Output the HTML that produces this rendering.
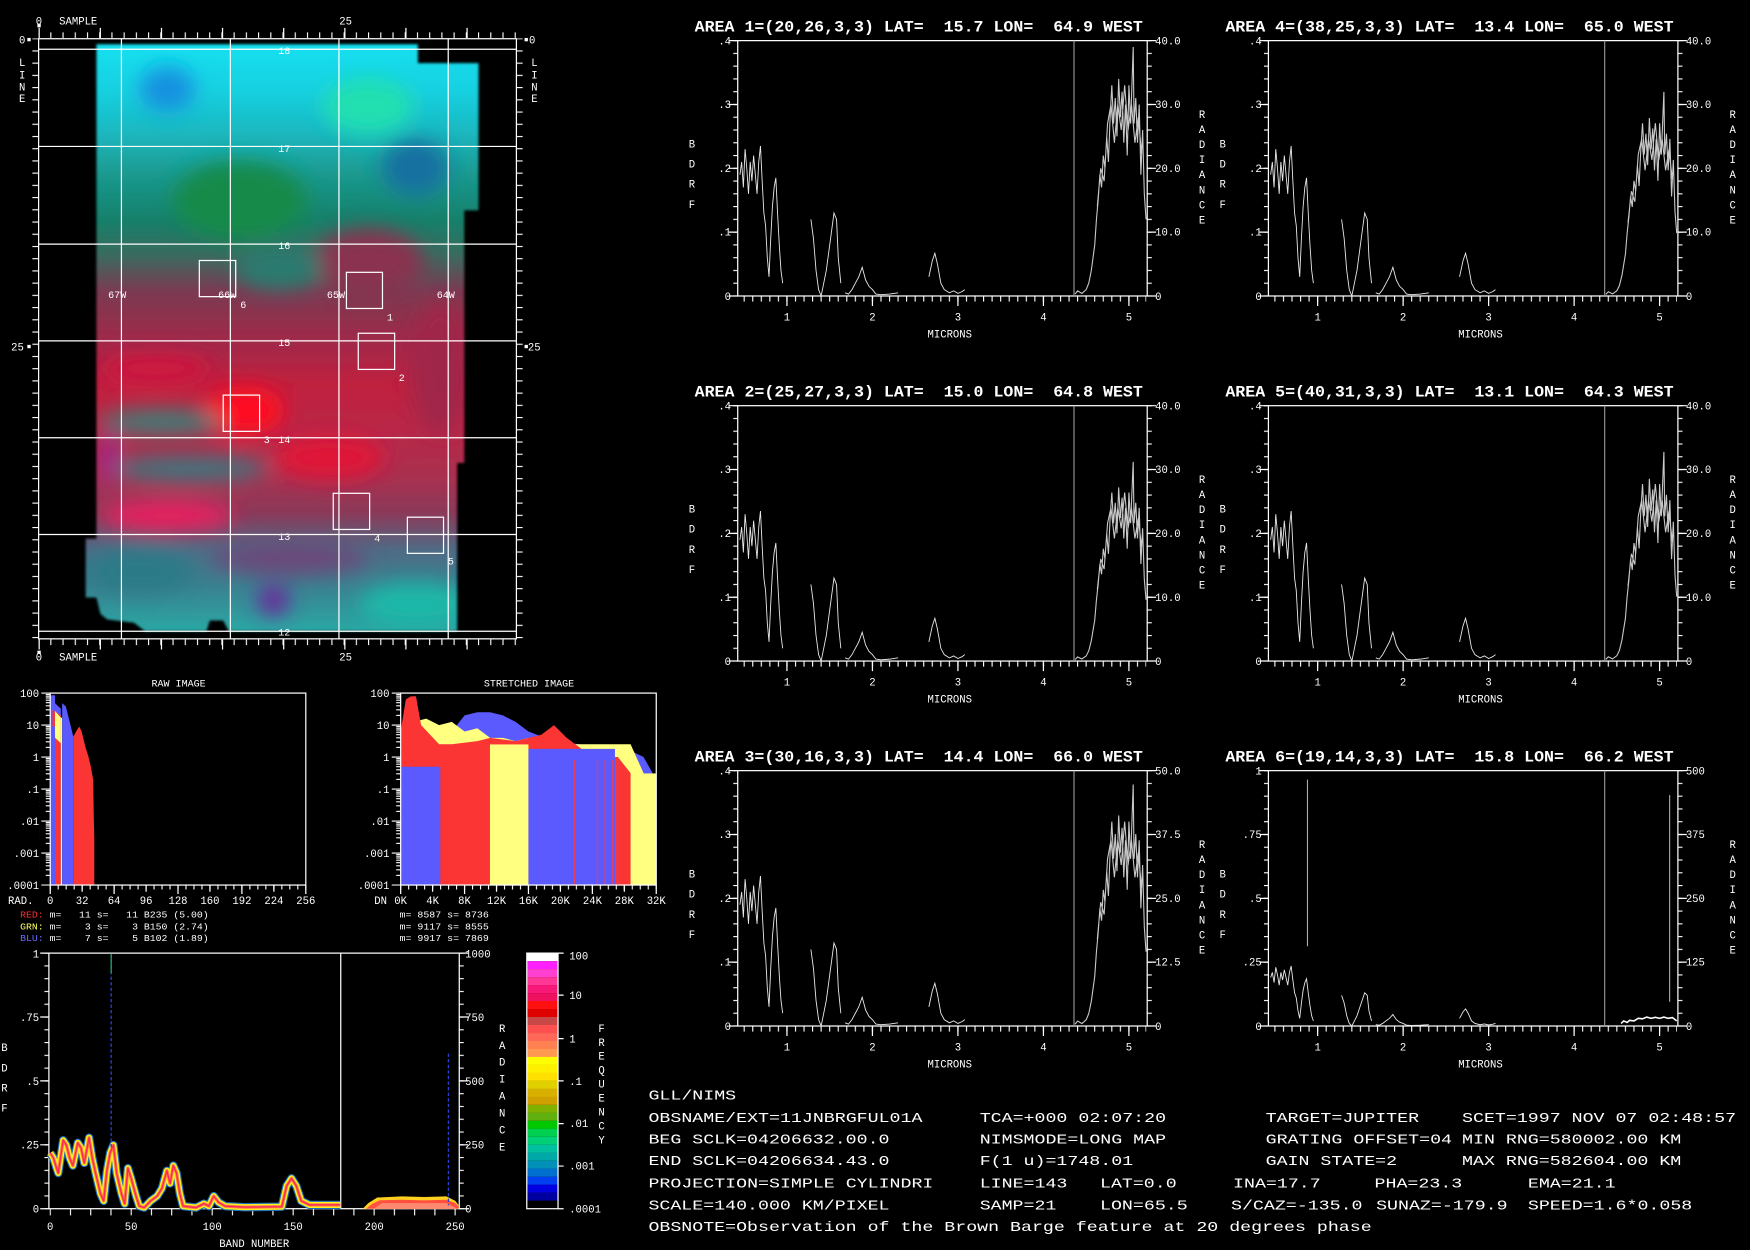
<!DOCTYPE html>
<html><head><meta charset="utf-8"><style>
html,body{margin:0;padding:0;background:#000;}
svg{display:block;}
text{font-family:"Liberation Mono",monospace;fill:#fff;white-space:pre;}
</style></head><body>
<svg width="1750" height="1250" viewBox="0 0 1568 1120" preserveAspectRatio="none" xmlns="http://www.w3.org/2000/svg">
<defs>
<pattern id="pb" patternUnits="userSpaceOnUse" x="5.3" y="0" width="7.66" height="10"><rect x="0" y="0" width="1" height="10" fill="#fff"/></pattern>
<pattern id="pl" patternUnits="userSpaceOnUse" x="0" y="-229.3" width="10" height="11.44"><rect x="0" y="0" width="10" height="1" fill="#fff"/></pattern>
<pattern id="plog" patternUnits="userSpaceOnUse" x="-10" y="-0.5" width="10" height="28.67">
<rect x="2" y="0" width="8" height="1" fill="#fff"/>
<rect x="6" y="1.3" width="4" height="1" fill="#fff"/><rect x="6" y="2.8" width="4" height="1" fill="#fff"/>
<rect x="6" y="4.4" width="4" height="1" fill="#fff"/><rect x="6" y="6.4" width="4" height="1" fill="#fff"/>
<rect x="6" y="8.6" width="4" height="1" fill="#fff"/><rect x="6" y="11.4" width="4" height="1" fill="#fff"/>
<rect x="6" y="15" width="4" height="1" fill="#fff"/><rect x="6" y="20" width="4" height="1" fill="#fff"/>
</pattern>
<pattern id="phb" patternUnits="userSpaceOnUse" x="-0.5" y="0" width="7.156" height="10"><rect x="0" y="0" width="1" height="10" fill="#fff"/></pattern>
<pattern id="pst" patternUnits="userSpaceOnUse" x="34.1" y="0" width="10.95" height="10"><rect x="0" y="0" width="1" height="10" fill="#fff"/></pattern>
<pattern id="psl" patternUnits="userSpaceOnUse" x="0" y="34.2" width="10" height="10.95"><rect x="0" y="0" width="10" height="1" fill="#fff"/></pattern>
<pattern id="pbl" patternUnits="userSpaceOnUse" x="0" y="853.5" width="10" height="11.45"><rect x="0" y="0" width="10" height="1" fill="#fff"/></pattern>
<pattern id="pbb" patternUnits="userSpaceOnUse" x="44.5" y="0" width="18.14" height="10"><rect x="0" y="0" width="1" height="10" fill="#fff"/></pattern>

<g id="ax">
<rect x="0" y="-228.8" width="366.9" height="228.8" fill="none" stroke="#fff" stroke-width="1.1"/>
<rect x="5" y="0" width="361" height="5" fill="url(#pb)"/>
<path d="M44.1,0v9M120.7,0v9M197.3,0v9M273.9,0v9M350.5,0v9" stroke="#fff" stroke-width="1.1"/>
<rect x="-4" y="-229.5" width="4" height="230" fill="url(#pl)"/>
<rect x="367" y="-229.5" width="4" height="230" fill="url(#pl)"/>
<path d="M-8,-228.8h8M-8,-171.6h8M-8,-114.4h8M-8,-57.2h8M-8,0h8M366.9,-228.8h8M366.9,-171.6h8M366.9,-114.4h8M366.9,-57.2h8M366.9,0h8" stroke="#fff" stroke-width="1.1"/>
<line x1="301.3" y1="-228.8" x2="301.3" y2="0" stroke="#9a9a9a" stroke-width="1"/>
<g font-size="9.5" text-anchor="middle">
<text x="44.1" y="22">1</text><text x="120.7" y="22">2</text><text x="197.3" y="22">3</text><text x="273.9" y="22">4</text><text x="350.5" y="22">5</text>
<text x="190" y="37">MICRONS</text>
<text x="-41" y="-133">B</text><text x="-41" y="-115">D</text><text x="-41" y="-97">R</text><text x="-41" y="-79">F</text>
<text x="416" y="-159.5">R</text><text x="416" y="-146">A</text><text x="416" y="-132.5">D</text><text x="416" y="-119">I</text><text x="416" y="-105.5">A</text><text x="416" y="-92">N</text><text x="416" y="-78.5">C</text><text x="416" y="-65">E</text>
</g>
</g>
<g id="lab4" font-size="9.5">
<g text-anchor="end"><text x="-6" y="-225.5">.4</text><text x="-6" y="-168.3">.3</text><text x="-6" y="-111">.2</text><text x="-6" y="-54">.1</text><text x="-6" y="3.5">0</text></g>
</g>
<path id="vis" fill="none" stroke="#e8e8e8" stroke-width="0.9" vector-effect="non-scaling-stroke" d="M.45,.19 L.47,.21 .49,.17 .51,.23 .53,.2 .55,.16 .57,.21 .59,.18 .61,.22 .63,.19 .65,.16 .67,.21 .69,.235 .71,.18 .73,.13 .75,.11 .77,.06 .79,.03 .81,.09 .83,.14 .85,.17 .87,.185 .89,.13 .91,.08 .93,.04 .95,.02 M1.28,.12 L1.31,.09 1.34,.04 1.37,.01 1.4,0 1.43,.02 1.46,.04 1.49,.07 1.52,.1 1.55,.13 1.58,.12 1.6,.06 1.63,.02 M1.68,.005 L1.72,.003 1.76,.01 1.8,.02 1.84,.03 1.88,.045 1.92,.025 1.96,.015 2,.01 2.04,.003 2.1,.002 2.2,.003 2.3,.005 M2.66,.03 L2.7,.055 2.73,.067 2.76,.05 2.8,.02 2.84,.01 2.9,.005 2.95,.008 3,.004 3.05,.007 3.08,.01"/>
<path id="ir" fill="none" stroke="#c8c8c8" stroke-width="1.1" vector-effect="non-scaling-stroke" d="M4.37,.003 L4.4,.008 4.45,.004 4.5,.01 4.53,.02 4.56,.04 4.6,.08 4.62,.12 4.64,.15 4.66,.19 4.68,.17 4.7,.22 4.72,.2 4.74,.25 4.76,.21 4.78,.28 4.8,.33 4.82,.27 4.84,.31 4.86,.25 4.88,.34 4.9,.28 4.92,.32 4.94,.24 4.96,.3 4.98,.22 5,.33 5.02,.27 5.04,.35 5.05,.39 5.06,.27 5.08,.31 5.1,.24 5.12,.3 5.14,.19 5.16,.26 5.18,.16 5.2,.12 M4.63,.14 L4.67,.2 4.71,.18 4.75,.27 4.79,.3 4.83,.24 4.87,.3 4.91,.26 4.95,.33 4.99,.26 5.03,.3 5.07,.24 5.11,.28 5.15,.22"/>
<polyline id="bc" fill="none" stroke-linejoin="round" points="45,1033 47.9,1037.6 50.7,1046.7 52.2,1051 56.6,1021.7 59.5,1026 62.4,1037.6 65.3,1044.4 69.7,1024 72.6,1028.5 75.5,1042 79.8,1019.4 82.7,1037.6 85.6,1051 90,1069.4 92.9,1076 95.8,1049 98.7,1033 101.6,1026 104.5,1051 108.8,1069.4 111.7,1078.5 114.6,1046.7 117.5,1055.8 121.9,1071.7 124.8,1080.7 129.2,1082 135,1076 140.8,1071.7 145.1,1064.8 149.5,1049 152.4,1060.3 155.3,1044.4 158.2,1051 161.1,1069.4 164,1080.7 175.6,1082 182.8,1078.5 187.2,1080.7 191.5,1071.7 195.9,1077.3 201.7,1080.7 219.1,1081.6 252.5,1081.2 256.8,1062.6 261.2,1055.8 265.5,1062.6 269.9,1076 277.2,1079.6 305,1079.6"/>

<g id="hax">
<rect x="0" y="0" width="229" height="172" fill="none" stroke="#fff" stroke-width="1.1"/>
<rect x="-10" y="-0.5" width="10" height="173" fill="url(#plog)"/>
<rect x="-0.5" y="172" width="230" height="4" fill="url(#phb)"/>
<path d="M0,172v8M57.25,172v8M114.5,172v8M171.75,172v8M229,172v8M28.6,172v6M85.9,172v6M143.1,172v6M200.4,172v6" stroke="#fff" stroke-width="1.1"/>
<g font-size="9.5" text-anchor="end">
<text x="-10" y="3.5">100</text><text x="-10" y="32">10</text><text x="-10" y="60.8">1</text><text x="-10" y="89.5">.1</text><text x="-10" y="118">.01</text><text x="-10" y="146.8">.001</text><text x="-10" y="175.5">.0001</text>
</g>
</g>
<clipPath id="ic"><polygon points="86.4,39.6 374.4,39.6 374.4,56.6 428.8,56.6 428.8,188.5 416,188.5 416,414.8 409.6,414.8 409.6,565.6 205,565.6 200,556 188,556 185,565.6 130,565.6 120,558 96,555 90,550 86.4,535.4 76.8,535.4 76.8,482.7 86.4,482.7"/></clipPath>
<linearGradient id="ig" gradientUnits="userSpaceOnUse" x1="0" y1="39.6" x2="0" y2="565.6">
<stop offset="0" stop-color="#12e0f0"/><stop offset=".08" stop-color="#18d0e0"/><stop offset=".15" stop-color="#1ab8c0"/>
<stop offset=".22" stop-color="#1a9a90"/><stop offset=".3" stop-color="#16806a"/><stop offset=".36" stop-color="#3a6a5e"/>
<stop offset=".42" stop-color="#7a3a52"/><stop offset=".5" stop-color="#9e2a4a"/><stop offset=".58" stop-color="#c0203e"/>
<stop offset=".66" stop-color="#b82848"/><stop offset=".74" stop-color="#a83050"/><stop offset=".8" stop-color="#8a3a5a"/>
<stop offset=".86" stop-color="#506a84"/><stop offset=".92" stop-color="#3a8090"/><stop offset="1" stop-color="#2aa8a4"/>
</linearGradient>
<filter id="bl" x="-20%" y="-20%" width="140%" height="140%"><feGaussianBlur stdDeviation="9"/></filter>
<filter id="bl2"><feGaussianBlur stdDeviation="1.3"/></filter>
</defs>

<!-- IMAGE PANEL -->
<g filter="url(#bl2)"><g clip-path="url(#ic)">
<rect x="70" y="35" width="370" height="540" fill="url(#ig)"/>
<g filter="url(#bl)">
<ellipse cx="150" cy="80" rx="25" ry="20" fill="#1890e0"/>
<ellipse cx="330" cy="95" rx="40" ry="25" fill="#20e0b0"/>
<ellipse cx="215" cy="180" rx="60" ry="35" fill="#128a4a"/>
<ellipse cx="372" cy="150" rx="30" ry="25" fill="#1870a0"/>
<ellipse cx="330" cy="235" rx="50" ry="30" fill="#8a3050"/>
<ellipse cx="250" cy="240" rx="40" ry="20" fill="#2a7a70"/>
<ellipse cx="140" cy="330" rx="50" ry="12" fill="#d01840"/>
<ellipse cx="220" cy="368" rx="35" ry="22" fill="#ff1020"/>
<ellipse cx="145" cy="378" rx="55" ry="11" fill="#3a8078"/>
<ellipse cx="170" cy="420" rx="70" ry="11" fill="#3a7880"/>
<ellipse cx="98" cy="410" rx="8" ry="25" fill="#a02090"/>
<ellipse cx="295" cy="410" rx="50" ry="20" fill="#e01838"/>
<ellipse cx="150" cy="462" rx="60" ry="14" fill="#e82060"/>
<ellipse cx="260" cy="500" rx="70" ry="15" fill="#6a4a7a"/>
<ellipse cx="245" cy="538" rx="15" ry="14" fill="#6a2a9a"/>
<ellipse cx="372" cy="542" rx="50" ry="20" fill="#1ab8a8"/>
<ellipse cx="125" cy="512" rx="50" ry="20" fill="#2a7a88"/>
<ellipse cx="395" cy="330" rx="28" ry="60" fill="#a02848"/>
</g></g></g>
<g stroke="#fff" stroke-width="1.1" fill="none">
<rect x="34.6" y="34.7" width="428.1" height="537.7"/>
<path d="M108.8,34.7V572.4M206.4,34.7V572.4M303.7,34.7V572.4M401.6,34.7V572.4"/>
<path d="M34.6,44.1H462.7M34.6,131.2H462.7M34.6,218.7H462.7M34.6,305.4H462.7M34.6,392.2H462.7M34.6,478.9H462.7M34.6,565.6H462.7"/>
<rect x="178.6" y="233.4" width="32.6" height="32.4"/>
<rect x="310.4" y="244" width="32.3" height="32.4"/>
<rect x="321" y="298.6" width="32.6" height="32.4"/>
<rect x="200" y="354" width="32.6" height="32.5"/>
<rect x="298.6" y="442" width="32.6" height="32.4"/>
<rect x="365" y="463.4" width="32.4" height="32.4"/>
</g>
<rect x="34.6" y="29" width="429" height="5" fill="url(#pst)"/>
<rect x="34.6" y="573" width="429" height="5" fill="url(#pst)"/>
<path d="M35.1,25v9M89.9,25v9M144.7,25v9M199.4,25v9M254.2,25v9M309,25v9M363.7,25v9M418.5,25v9M35.1,573v9M89.9,573v9M144.7,573v9M199.4,573v9M254.2,573v9M309,573v9M363.7,573v9M418.5,573v9" stroke="#fff" stroke-width="1.1"/>
<rect x="29" y="34.5" width="5.6" height="539" fill="url(#psl)"/>
<rect x="462.7" y="34.5" width="5.6" height="539" fill="url(#psl)"/>
<rect x="33.5" y="21.5" width="3" height="3" fill="#fff"/><rect x="33.5" y="583" width="3" height="3" fill="#fff"/>
<rect x="24.5" y="34" width="3" height="3" fill="#fff"/><rect x="24.5" y="309" width="3" height="3" fill="#fff"/>
<rect x="470" y="34" width="3" height="3" fill="#fff"/><rect x="470" y="309" width="3" height="3" fill="#fff"/>
<g font-size="9.5">
<text x="32" y="22">0</text><text x="53" y="22">SAMPLE</text><text x="304" y="22">25</text>
<text x="32" y="592">0</text><text x="53" y="592">SAMPLE</text><text x="304" y="592">25</text>
<text x="17" y="39">0</text><text x="10" y="314">25</text><text x="474" y="39">0</text><text x="473" y="314">25</text>
<text x="17" y="59">L</text><text x="17" y="70.5">I</text><text x="17" y="81">N</text><text x="17" y="91.5">E</text>
<text x="476" y="59">L</text><text x="476" y="70.5">I</text><text x="476" y="81">N</text><text x="476" y="91.5">E</text>
</g>
<g font-size="9" text-anchor="middle">
<text x="254.7" y="48.5">18</text><text x="254.7" y="136">17</text><text x="254.7" y="223">16</text><text x="254.7" y="310">15</text><text x="254.7" y="397">14</text><text x="254.7" y="484">13</text><text x="254.7" y="569.5">12</text>
<text x="105" y="267">67W</text><text x="203.5" y="267">66W</text><text x="301" y="267">65W</text><text x="399.4" y="267">64W</text>
<text x="349.4" y="287">1</text><text x="360" y="341.5">2</text><text x="239" y="397">3</text><text x="338" y="485">4</text><text x="404" y="506">5</text><text x="218" y="276">6</text>
</g>

<!-- HISTOGRAMS -->
<g font-size="9" text-anchor="middle"><text x="160" y="615">RAW IMAGE</text><text x="474" y="615">STRETCHED IMAGE</text></g>
<g transform="translate(45,621)">
<rect x="0" y="2" width="4.3" height="170" fill="#5a5aff"/>
<polygon points="4.3,9 9.5,14 9.5,172 4.3,172" fill="#5a5aff"/>
<polygon points="2,15 9.5,20 9.5,172 2,172" fill="#fb3434"/>
<rect x="0" y="30" width="4.3" height="142" fill="#5a5aff"/>
<polygon points="4.3,16 9.5,22 9.5,45 4.3,40" fill="#ffff80"/>
<rect x="9.5" y="22" width="1.2" height="150" fill="#ffff80"/>
<polygon points="10.7,9 14,12 16,20 20.7,39 20.7,172 10.7,172" fill="#5a5aff"/>
<polygon points="20.7,39 24,33 26,30 28,34 30,42 32,50 34,56 36,64 37.5,72 38.5,78 39,110 39.5,130 39.5,172 20.7,172" fill="#fb3434"/>
<use href="#hax"/>
</g>
<g transform="translate(359,621)">
<polygon points="0,65.9 22.9,63 34.4,57.3 45.8,34.4 57.3,20 68.7,17.2 80.2,17.2 91.6,20 103,25.8 114.5,34.4 137.4,43 160.3,45.8 183.2,48.7 206,51.6 217.6,57.3 229,77.4 229,172 0,172" fill="#5a5aff"/>
<polygon points="0,40.1 11.5,25.8 22.9,22.9 34.4,28.7 45.8,25.8 57.3,34.4 68.7,31.5 80.2,40.1 91.6,40.1 103,43 114.5,40.1 137.4,45.8 206,45.8 217.6,71.7 229,100.3 229,172 0,172" fill="#ffff80"/>
<polygon points="0,34.4 4.6,5.7 9,3 13.7,2.85 18.3,28.7 34.4,45.8 45.8,45.8 68.7,43 80.2,40.1 103,43 126,37.3 137.4,28.7 148.8,40.1 171.8,57.3 194.6,57.3 206,71.7 217.6,91.7 229,114.7 229,172 0,172" fill="#fb3434"/>
<rect x="0" y="66" width="35.5" height="106" fill="#5a5aff"/>
<rect x="80" y="46" width="34.5" height="126" fill="#ffff80"/>
<rect x="114.5" y="50" width="77.5" height="122" fill="#5a5aff"/>
<rect x="206" y="72" width="23" height="100" fill="#ffff80"/>
<path d="M155.7,60V172M176.3,60V172M183.2,60V172M190,60V172M194.6,60V172" stroke="#e04060" stroke-width="1.2"/>
<use href="#hax"/>
</g>
<g font-size="9.5" text-anchor="middle">
<text x="30" y="810" text-anchor="end">RAD.</text>
<text x="45" y="810">0</text><text x="73.6" y="810">32</text><text x="102.2" y="810">64</text><text x="130.9" y="810">96</text><text x="159.5" y="810">128</text><text x="188.1" y="810">160</text><text x="216.8" y="810">192</text><text x="245.4" y="810">224</text><text x="274" y="810">256</text>
<text x="341" y="810">DN</text>
<text x="359" y="810">0K</text><text x="387.6" y="810">4K</text><text x="416.2" y="810">8K</text><text x="444.9" y="810">12K</text><text x="473.5" y="810">16K</text><text x="502.1" y="810">20K</text><text x="530.8" y="810">24K</text><text x="559.4" y="810">28K</text><text x="588" y="810">32K</text>
</g>
<g font-size="8.3">
<text x="18" y="822" textLength="169" lengthAdjust="spacingAndGlyphs"><tspan style="fill:#ff3030">RED:</tspan> m=   11 s=   11 B235 (5.00)</text>
<text x="18" y="833" textLength="169" lengthAdjust="spacingAndGlyphs"><tspan style="fill:#ffff60">GRN:</tspan> m=    3 s=    3 B150 (2.74)</text>
<text x="18" y="843" textLength="169" lengthAdjust="spacingAndGlyphs"><tspan style="fill:#6a6aff">BLU:</tspan> m=    7 s=    5 B102 (1.89)</text>
<text x="358" y="822" textLength="80" lengthAdjust="spacingAndGlyphs">m= 8587 s= 8736</text>
<text x="358" y="833" textLength="80" lengthAdjust="spacingAndGlyphs">m= 9117 s= 8555</text>
<text x="358" y="843" textLength="80" lengthAdjust="spacingAndGlyphs">m= 9917 s= 7869</text>
</g>

<!-- BAND PLOT -->
<rect x="43.8" y="854" width="367.7" height="229" fill="none" stroke="#fff" stroke-width="1.1"/>
<line x1="305.3" y1="854" x2="305.3" y2="1083" stroke="#fff" stroke-width="1.1"/>
<rect x="39.8" y="853.5" width="4" height="230" fill="url(#pbl)"/>
<rect x="411.5" y="853.5" width="4" height="230" fill="url(#pbl)"/>
<path d="M36,854h8M36,911.25h8M36,968.5h8M36,1025.75h8M36,1083h8M411.5,854h8M411.5,911.25h8M411.5,968.5h8M411.5,1025.75h8M411.5,1083h8" stroke="#fff" stroke-width="1.1"/>
<rect x="44.5" y="1083" width="368" height="6" fill="url(#pbb)"/>
<use href="#bc" stroke="#1a70c0" stroke-width="7.5"/>
<use href="#bc" stroke="#ffee20" stroke-width="5.5"/>
<use href="#bc" stroke="#ff7a40" stroke-width="2.8"/>
<use href="#bc" stroke="#ff2060" stroke-width="1.1"/>
<polygon points="325,1083 330,1078 338,1073 360,1072 380,1072.5 400,1072 408,1076 411,1080 411,1083" fill="#ffd020"/>
<polygon points="328,1083 333,1079 340,1075.5 360,1075 380,1075.5 400,1075 408,1078 411,1081 411,1083" fill="#ff5040"/>
<polygon points="335,1083 342,1078 400,1078 410,1083" fill="#ff8870"/>
<line x1="99.6" y1="855" x2="99.6" y2="1030" stroke="#2a40d0" stroke-width="1.2" stroke-dasharray="3,2"/>
<line x1="99.6" y1="855" x2="99.6" y2="872" stroke="#20a070" stroke-width="1.2"/>
<line x1="401.8" y1="944" x2="401.8" y2="1080" stroke="#2a40d0" stroke-width="1.2" stroke-dasharray="3,2"/>
<g font-size="9.5">
<g text-anchor="end"><text x="35" y="858">1</text><text x="35" y="915">.75</text><text x="35" y="972">.5</text><text x="35" y="1029">.25</text><text x="35" y="1086.5">0</text></g>
<text x="416.8" y="858">1000</text><text x="416.8" y="915">750</text><text x="416.8" y="972">500</text><text x="416.8" y="1029">250</text><text x="416.8" y="1086.5">0</text>
<g text-anchor="middle">
<text x="45" y="1102">0</text><text x="117.5" y="1102">50</text><text x="190.1" y="1102">100</text><text x="262.7" y="1102">150</text><text x="335.3" y="1102">200</text><text x="407.8" y="1102">250</text>
<text x="227.8" y="1117.5">BAND NUMBER</text>
<text x="4" y="941.5">B</text><text x="4" y="960">D</text><text x="4" y="978">R</text><text x="4" y="996">F</text>
<text x="450" y="924.5">R</text><text x="450" y="939.7">A</text><text x="450" y="954.9">D</text><text x="450" y="970.1">I</text><text x="450" y="985.3">A</text><text x="450" y="1000.5">N</text><text x="450" y="1015.7">C</text><text x="450" y="1030.9">E</text>
<text x="539" y="924.5">F</text><text x="539" y="937">R</text><text x="539" y="949.5">E</text><text x="539" y="962">Q</text><text x="539" y="974.5">U</text><text x="539" y="987">E</text><text x="539" y="999.5">N</text><text x="539" y="1012">C</text><text x="539" y="1024.5">Y</text>
</g>
<text x="510" y="859.5">100</text><text x="510" y="895">10</text><text x="510" y="934">1</text><text x="510" y="972">.1</text><text x="510" y="1010">.01</text><text x="510" y="1048">.001</text><text x="510" y="1086.5">.0001</text>
</g>
<g>
<rect x="472" y="854" width="28" height="7.2" fill="#ffffff"/><rect x="472" y="861.2" width="28" height="7.2" fill="#ff20ff"/><rect x="472" y="868.3" width="28" height="7.2" fill="#ff40d0"/><rect x="472" y="875.5" width="28" height="7.2" fill="#ff3898"/><rect x="472" y="882.6" width="28" height="7.2" fill="#f81878"/><rect x="472" y="889.8" width="28" height="7.2" fill="#f01060"/><rect x="472" y="896.9" width="28" height="7.2" fill="#ff1010"/><rect x="472" y="904.1" width="28" height="7.2" fill="#e00000"/><rect x="472" y="911.2" width="28" height="7.2" fill="#c84848"/><rect x="472" y="918.4" width="28" height="7.2" fill="#ff5050"/><rect x="472" y="925.6" width="28" height="7.2" fill="#ff6858"/><rect x="472" y="932.7" width="28" height="7.2" fill="#ff8050"/><rect x="472" y="939.9" width="28" height="7.2" fill="#ff9850"/><rect x="472" y="947" width="28" height="7.2" fill="#ffff00"/><rect x="472" y="954.2" width="28" height="7.2" fill="#fff000"/><rect x="472" y="961.3" width="28" height="7.2" fill="#ffe000"/><rect x="472" y="968.5" width="28" height="7.2" fill="#e0d000"/><rect x="472" y="975.7" width="28" height="7.2" fill="#d8b000"/><rect x="472" y="982.8" width="28" height="7.2" fill="#d0a000"/><rect x="472" y="990" width="28" height="7.2" fill="#80b000"/><rect x="472" y="997.1" width="28" height="7.2" fill="#60b010"/><rect x="472" y="1004.3" width="28" height="7.2" fill="#00c800"/><rect x="472" y="1011.4" width="28" height="7.2" fill="#00d050"/><rect x="472" y="1018.6" width="28" height="7.2" fill="#00d078"/><rect x="472" y="1025.8" width="28" height="7.2" fill="#00c0a0"/><rect x="472" y="1032.9" width="28" height="7.2" fill="#00a8a8"/><rect x="472" y="1040.1" width="28" height="7.2" fill="#0090b8"/><rect x="472" y="1047.2" width="28" height="7.2" fill="#0070d0"/><rect x="472" y="1054.4" width="28" height="7.2" fill="#0040f0"/><rect x="472" y="1061.5" width="28" height="7.2" fill="#0000e0"/><rect x="472" y="1068.7" width="28" height="7.2" fill="#0000a0"/><rect x="472" y="1075.8" width="28" height="7.2" fill="#000000"/>
<rect x="472" y="854" width="28" height="229" fill="none" stroke="#fff" stroke-width="1.1"/>
<path d="M500,854h5M500,891.6h5M500,930.6h5M500,968.5h5M500,1006.8h5M500,1044.8h5M500,1083h5" stroke="#fff" stroke-width="1.1"/>
</g>

<!-- SPECTRAL PANELS -->
<g font-size="14" font-weight="bold">
<text x="622.4" y="28.3" textLength="401.6" lengthAdjust="spacingAndGlyphs">AREA 1=(20,26,3,3) LAT=  15.7 LON=  64.9 WEST</text>
<text x="1097.9" y="28.3" textLength="401.6" lengthAdjust="spacingAndGlyphs">AREA 4=(38,25,3,3) LAT=  13.4 LON=  65.0 WEST</text>
<text x="622.4" y="355.4" textLength="401.6" lengthAdjust="spacingAndGlyphs">AREA 2=(25,27,3,3) LAT=  15.0 LON=  64.8 WEST</text>
<text x="1097.9" y="355.4" textLength="401.6" lengthAdjust="spacingAndGlyphs">AREA 5=(40,31,3,3) LAT=  13.1 LON=  64.3 WEST</text>
<text x="622.4" y="682.4" textLength="401.6" lengthAdjust="spacingAndGlyphs">AREA 3=(30,16,3,3) LAT=  14.4 LON=  66.0 WEST</text>
<text x="1097.9" y="682.4" textLength="401.6" lengthAdjust="spacingAndGlyphs">AREA 6=(19,14,3,3) LAT=  15.8 LON=  66.2 WEST</text>
</g>
<g transform="translate(661,265.2)"><use href="#ax"/><use href="#lab4"/>
<g font-size="9.5"><text x="374" y="-225.5">40.0</text><text x="374" y="-168.3">30.0</text><text x="374" y="-111">20.0</text><text x="374" y="-54">10.0</text><text x="374" y="3.5">0</text></g>
<g transform="translate(-32.48,0) scale(76.6,-572)"><use href="#vis"/><use href="#ir"/></g></g>
<g transform="translate(1136.5,265.2)"><use href="#ax"/><use href="#lab4"/>
<g font-size="9.5"><text x="374" y="-225.5">40.0</text><text x="374" y="-168.3">30.0</text><text x="374" y="-111">20.0</text><text x="374" y="-54">10.0</text><text x="374" y="3.5">0</text></g>
<g transform="translate(-32.48,0) scale(76.6,-572)"><use href="#vis"/><g transform="scale(1,.82)"><use href="#ir"/></g></g></g>
<g transform="translate(661,592.3)"><use href="#ax"/><use href="#lab4"/>
<g font-size="9.5"><text x="374" y="-225.5">40.0</text><text x="374" y="-168.3">30.0</text><text x="374" y="-111">20.0</text><text x="374" y="-54">10.0</text><text x="374" y="3.5">0</text></g>
<g transform="translate(-32.48,0) scale(76.6,-572)"><use href="#vis"/><g transform="scale(1,.8)"><use href="#ir"/></g></g></g>
<g transform="translate(1136.5,592.3)"><use href="#ax"/><use href="#lab4"/>
<g font-size="9.5"><text x="374" y="-225.5">40.0</text><text x="374" y="-168.3">30.0</text><text x="374" y="-111">20.0</text><text x="374" y="-54">10.0</text><text x="374" y="3.5">0</text></g>
<g transform="translate(-32.48,0) scale(76.6,-572)"><use href="#vis"/><g transform="scale(1,.84)"><use href="#ir"/></g></g></g>
<g transform="translate(661,919.3)"><use href="#ax"/><use href="#lab4"/>
<g font-size="9.5"><text x="374" y="-225.5">50.0</text><text x="374" y="-168.3">37.5</text><text x="374" y="-111">25.0</text><text x="374" y="-54">12.5</text><text x="374" y="3.5">0</text></g>
<g transform="translate(-32.48,0) scale(76.6,-572)"><use href="#vis"/><g transform="scale(1,.97)"><use href="#ir"/></g></g></g>
<g transform="translate(1136.5,919.3)"><use href="#ax"/>
<g font-size="9.5"><g text-anchor="end"><text x="-6" y="-225.5">1</text><text x="-6" y="-168.3">.75</text><text x="-6" y="-111">.5</text><text x="-6" y="-54">.25</text><text x="-6" y="3.5">0</text></g>
<text x="374" y="-225.5">500</text><text x="374" y="-168.3">375</text><text x="374" y="-111">250</text><text x="374" y="-54">125</text><text x="374" y="3.5">0</text></g>
<path d="M35,-220.8V-71.5M359.5,-206.9V-21.7" stroke="#aaa" stroke-width="1"/>
<g transform="translate(-32.48,0) scale(76.6,-228.8)"><use href="#vis"/>
<path fill="none" stroke="#fff" stroke-width="1.6" vector-effect="non-scaling-stroke" d="M4.55,.01 L4.58,.02 4.62,.014 4.65,.022 4.7,.02 4.75,.03 4.8,.028 4.85,.035 4.9,.03 4.95,.034 5,.03 5.05,.035 5.1,.03 5.15,.033 5.2,.02"/></g></g>

<!-- BOTTOM TEXT -->
<g font-size="12.5">
<text x="581" y="985" textLength="78.6" lengthAdjust="spacingAndGlyphs">GLL/NIMS</text>
<text x="581" y="1005.5" textLength="245.5" lengthAdjust="spacingAndGlyphs">OBSNAME/EXT=11JNBRGFUL01A</text>
<text x="877.8" y="1005.5" textLength="167" lengthAdjust="spacingAndGlyphs">TCA=+000 02:07:20</text>
<text x="1134" y="1005.5" textLength="137.5" lengthAdjust="spacingAndGlyphs">TARGET=JUPITER</text>
<text x="1310" y="1005.5" textLength="245.5" lengthAdjust="spacingAndGlyphs">SCET=1997 NOV 07 02:48:57</text>
<text x="581" y="1024.6" textLength="216" lengthAdjust="spacingAndGlyphs">BEG SCLK=04206632.00.0</text>
<text x="877.8" y="1024.6" textLength="167" lengthAdjust="spacingAndGlyphs">NIMSMODE=LONG MAP</text>
<text x="1134" y="1024.6" textLength="167" lengthAdjust="spacingAndGlyphs">GRATING OFFSET=04</text>
<text x="1310" y="1024.6" textLength="196.4" lengthAdjust="spacingAndGlyphs">MIN RNG=580002.00 KM</text>
<text x="581" y="1044" textLength="216" lengthAdjust="spacingAndGlyphs">END SCLK=04206634.43.0</text>
<text x="877.8" y="1044" textLength="137.5" lengthAdjust="spacingAndGlyphs">F(1 u)=1748.01</text>
<text x="1134" y="1044" textLength="117.8" lengthAdjust="spacingAndGlyphs">GAIN STATE=2</text>
<text x="1310" y="1044" textLength="196.4" lengthAdjust="spacingAndGlyphs">MAX RNG=582604.00 KM</text>
<text x="581" y="1064" textLength="255.3" lengthAdjust="spacingAndGlyphs">PROJECTION=SIMPLE CYLINDRI</text>
<text x="877.8" y="1064" textLength="78.6" lengthAdjust="spacingAndGlyphs">LINE=143</text>
<text x="985.6" y="1064" textLength="68.7" lengthAdjust="spacingAndGlyphs">LAT=0.0</text>
<text x="1104.8" y="1064" textLength="78.6" lengthAdjust="spacingAndGlyphs">INA=17.7</text>
<text x="1231.6" y="1064" textLength="78.6" lengthAdjust="spacingAndGlyphs">PHA=23.3</text>
<text x="1369" y="1064" textLength="78.6" lengthAdjust="spacingAndGlyphs">EMA=21.1</text>
<text x="581" y="1083.7" textLength="216" lengthAdjust="spacingAndGlyphs">SCALE=140.000 KM/PIXEL</text>
<text x="877.8" y="1083.7" textLength="68.7" lengthAdjust="spacingAndGlyphs">SAMP=21</text>
<text x="985.6" y="1083.7" textLength="78.6" lengthAdjust="spacingAndGlyphs">LON=65.5</text>
<text x="1103" y="1083.7" textLength="117.8" lengthAdjust="spacingAndGlyphs">S/CAZ=-135.0</text>
<text x="1233" y="1083.7" textLength="117.8" lengthAdjust="spacingAndGlyphs">SUNAZ=-179.9</text>
<text x="1369" y="1083.7" textLength="147.3" lengthAdjust="spacingAndGlyphs">SPEED=1.6*0.058</text>
<text x="581" y="1103" textLength="648" lengthAdjust="spacingAndGlyphs">OBSNOTE=Observation of the Brown Barge feature at 20 degrees phase</text>
</g>
</svg>
</body></html>
